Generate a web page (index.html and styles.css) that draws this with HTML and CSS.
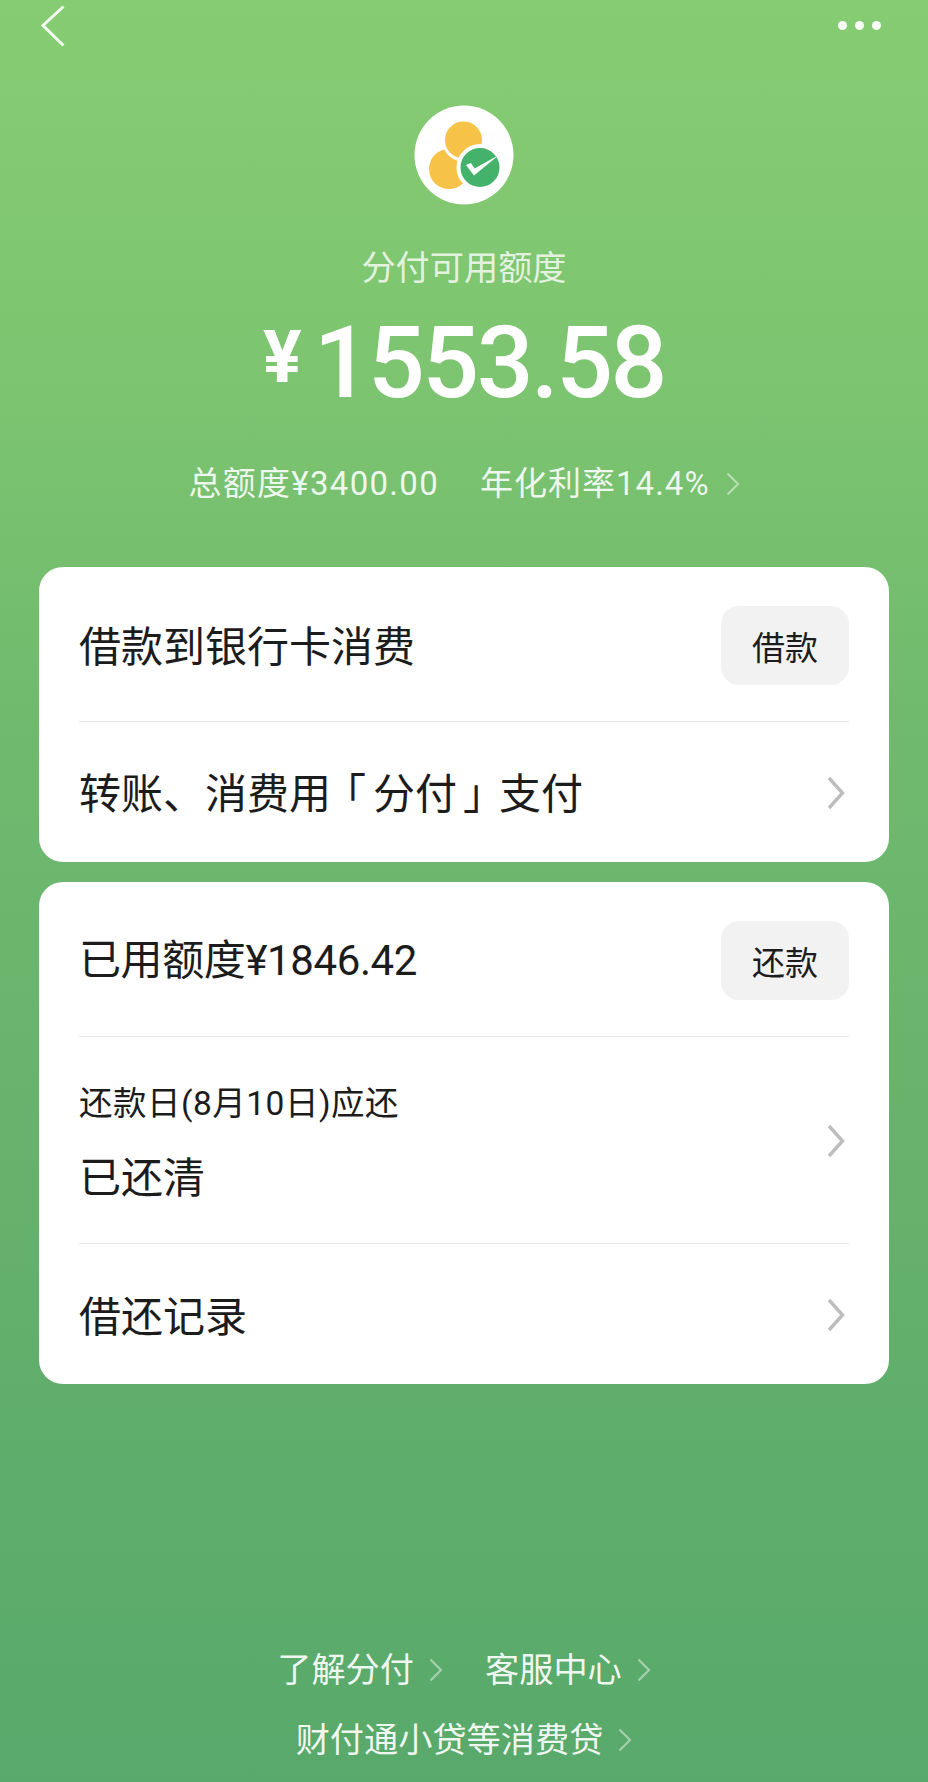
FILE: index.html
```html
<!DOCTYPE html>
<html lang="zh-CN">
<head>
<meta charset="utf-8">
<title>分付</title>
<link rel="stylesheet" href="styles.css">
</head>
<body>
<main class="page">
  <header class="topbar">
    <svg class="back" viewBox="0 0 24 42" aria-label="返回"><path d="M22.5 1.5 2 20.5 22.5 40.5"/></svg>
    <div class="more"><i></i><i></i><i></i></div>
  </header>
  <section class="hero">
    <svg class="logo" viewBox="0 0 100 100">
      <circle class="logo-bg" cx="50" cy="50" r="49.5"/>
      <circle class="coin" cx="35" cy="64" r="20"/>
      <circle class="coin cut" cx="49.5" cy="35" r="20"/>
      <circle class="badge" cx="66" cy="62.5" r="21.5"/>
      <polygon class="tick" points="52,60 57,58 60.5,63.5 85,50 60,70.5"/>
    </svg>
    <h1 class="hero-title">分付可用额度</h1>
    <div class="amount"><span class="currency">¥</span><span class="value">1553.58</span></div>
    <div class="meta">
      <span class="meta-total">总额度¥3400.00</span>
      <span>年化利率14.4%</span>
      <svg class="chev-sm" viewBox="0 0 14 24"><path d="M1.5 1.5 12 12 1.5 22.5"/></svg>
    </div>
  </section>
  <section class="card">
    <div class="row row-top">
      <span class="row-text row-text--low">借款到银行卡消费</span>
      <span class="btn">借款</span>
    </div>
    <div class="row row-plain">
      <span class="row-text row-text--mid">转账、消费用<span class="open">「</span>分付<span class="close">」</span>支付</span>
      <svg class="chev" viewBox="0 0 18 34"><path d="M2 2 15.5 17 2 32"/></svg>
    </div>
  </section>
  <section class="card">
    <div class="row row-top">
      <span class="row-text row-text--num">已用额度¥1846.42</span>
      <span class="btn">还款</span>
    </div>
    <div class="row row-due">
      <div class="due">
        <span class="due-label">还款日(8月10日)应还</span>
        <span class="row-text">已还清</span>
      </div>
      <svg class="chev" viewBox="0 0 18 34"><path d="M2 2 15.5 17 2 32"/></svg>
    </div>
    <div class="row row-plain">
      <span class="row-text">借还记录</span>
      <svg class="chev" viewBox="0 0 18 34"><path d="M2 2 15.5 17 2 32"/></svg>
    </div>
  </section>
  <footer class="footer">
    <div class="foot-line">
      <span class="link">了解分付<svg class="chev-sm" viewBox="0 0 14 24"><path d="M1.5 1.5 12 12 1.5 22.5"/></svg></span>
      <span class="link">客服中心<svg class="chev-sm" viewBox="0 0 14 24"><path d="M1.5 1.5 12 12 1.5 22.5"/></svg></span>
    </div>
    <div class="foot-line">
      <span class="link">财付通小贷等消费贷<svg class="chev-sm" viewBox="0 0 14 24"><path d="M1.5 1.5 12 12 1.5 22.5"/></svg></span>
    </div>
  </footer>
</main>
</body>
</html>
```
FILE: styles.css
```css
* { box-sizing: border-box; }
html, body { margin: 0; padding: 0; }
body {
  font-family: Roboto, "Noto Sans CJK SC", sans-serif;
  color: #1c1c1c;
}
.page {
  width: 928px;
  height: 1782px;
  overflow: hidden;
  display: flex;
  flex-direction: column;
  background: linear-gradient(180deg, #86cc72 0%, #7cc470 22%, #70ba6e 40%, #62af6c 75%, #58a96b 100%);
}
.topbar {
  height: 105px;
  padding: 5px 47px 0 41px;
  display: flex;
  justify-content: space-between;
  align-items: flex-start;
}
.back { width: 24px; height: 42px; fill: none; stroke: #fff; stroke-width: 3; opacity: .9; }
.more { display: flex; gap: 8px; margin-top: 16px; }
.more i { width: 9px; height: 9px; border-radius: 50%; background: #fff; opacity: .95; }
.hero { display: flex; flex-direction: column; align-items: center; }
.logo { width: 100px; height: 100px; display: block; }
.logo-bg { fill: #fff; }
.coin { fill: #f7c248; }
.cut { stroke: #fff; stroke-width: 3; }
.badge { fill: #45b26b; stroke: #fff; stroke-width: 4; }
.tick { fill: #fff; }
.hero-title {
  margin: 39px 0 0;
  font-size: 34.2px;
  line-height: 48px;
  font-weight: 400;
  color: rgba(255, 255, 255, .8);
}
.amount {
  margin-top: 16px;
  display: flex;
  align-items: flex-start;
  color: #fff;
  line-height: 110px;
  height: 110px;
}
.currency { font-size: 72px; font-weight: 700; line-height: 80px; margin: 10px 12px 0 0; }
.value { font-size: 100px; font-weight: 500; letter-spacing: -2.5px; }
.meta {
  margin-top: 44px;
  height: 44px;
  display: flex;
  align-items: center;
  gap: 41px;
  font-size: 33px;
  letter-spacing: 1px;
  line-height: 44px;
  color: rgba(255, 255, 255, .88);
}
.meta-total { letter-spacing: 1.3px; }
.meta .chev-sm { margin-left: -25px; }
.chev-sm {
  width: 14px;
  height: 24px;
  fill: none;
  stroke: rgba(255, 255, 255, .45);
  stroke-width: 2.2;
  flex: none;
}
.card {
  margin: 0 39px 20px;
  padding: 0 40px;
  background: #fff;
  border-radius: 24px;
}
.hero + .card { margin-top: 61px; }
.row {
  display: flex;
  align-items: center;
  justify-content: space-between;
  border-bottom: 1px solid #e6e6e6;
}
.row:last-child { border-bottom: 0; }
.row-top { height: 155px; }
.row-plain { height: 140px; }
.row-due { height: 207px; }
.row-text { font-size: 42px; line-height: 56px; }
.row-top .row-text { padding-top: 4px; }
.row-plain .row-text { padding-top: 7px; }
.row .row-text--low { padding-top: 8px; }
.row .row-text--mid { padding-top: 6px; }
.row-text--num { letter-spacing: -.4px; }
.open, .close { display: inline-block; font-feature-settings: "halt"; }
.open { padding: 0 7px 0 14px; }
.close { padding: 0 15px 0 6px; }
.btn {
  width: 128px;
  height: 79px;
  margin-top: 3px;
  border-radius: 18px;
  background: #f2f2f2;
  display: flex;
  align-items: center;
  justify-content: center;
  font-size: 33px;
}
.chev {
  width: 18px;
  height: 34px;
  margin: 2px 4px 0 0;
  fill: none;
  stroke: #bdbdbd;
  stroke-width: 3.4;
}
.due { display: flex; flex-direction: column; gap: 25px; padding-top: 9px; }
.due-label { font-size: 33.5px; letter-spacing: .5px; line-height: 44px; }
.footer {
  margin-top: auto;
  padding-bottom: 18px;
  display: flex;
  flex-direction: column;
  gap: 22px;
  align-items: center;
  color: rgba(255, 255, 255, .92);
  font-size: 34.2px;
  line-height: 48px;
}
.foot-line { display: flex; gap: 42px; justify-content: center; }
.link { display: flex; align-items: center; gap: 15px; }
```
